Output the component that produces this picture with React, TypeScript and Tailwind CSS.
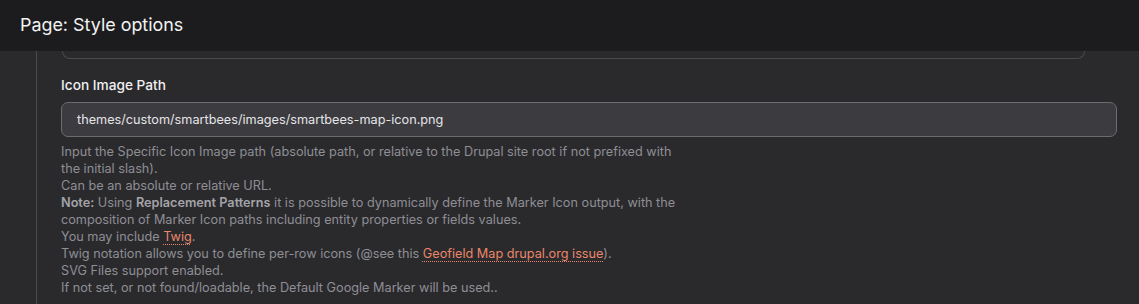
import React from "react";

export default function App() {
  return (
    <div className="w-[1139px] h-[304px] overflow-hidden bg-[#2a2a2d] font-['Inter',sans-serif] flex flex-col">
      <div className="h-[51px] shrink-0 bg-[#1c1c1e] flex items-center px-[20px]">
        <h1 className="text-[17.9px] text-[#f2f2f3] font-normal">Page: Style options</h1>
      </div>
      <div className="flex flex-1 min-h-0">
        <div className="w-[36px] shrink-0" />
        <div className="w-px bg-[#4a4a4f] shrink-0" />
        <div className="flex-1 min-w-0 pl-[24px] pr-[22px]">
          <div className="ml-px mr-[32px] h-[8px] border border-t-0 border-[#4a4a4f] rounded-b-[8px]" />
          <div className="mt-[17px] text-[13.7px] font-medium text-[#f0f0f2] leading-[18px]">Icon Image Path</div>
          <div className="mt-[8px] h-[35px] rounded-[7px] border border-[#6c6b72] bg-[#3c3b40] flex items-center px-[15px] text-[12.7px] text-[#e4e4e7]">
            themes/custom/smartbees/images/smartbees-map-icon.png
          </div>
          <div className="mt-[6px] text-[12.7px] leading-[17px] text-[#8e8e94] max-w-[622px]">
            <p>Input the Specific Icon Image path (absolute path, or relative to the Drupal site root if not prefixed with the initial slash).</p>
            <p>Can be an absolute or relative URL.</p>
            <p>
              <strong className="font-semibold text-[#a3a3a8]">Note:</strong> Using <strong className="font-semibold text-[#a3a3a8]">Replacement Patterns</strong> it is possible to dynamically define the Marker Icon output, with the composition of Marker Icon paths including entity properties or fields values.
            </p>
            <p>
              You may include <a className="text-[#e9866a] underline decoration-dotted decoration-1 underline-offset-[3px]">Twig</a>.
            </p>
            <p>
              Twig notation allows you to define per-row icons (@see this <a className="text-[#e9866a] underline decoration-dotted decoration-1 underline-offset-[3px]">Geofield Map drupal.org issue</a>).
            </p>
            <p>SVG Files support enabled.</p>
            <p>If not set, or not found/loadable, the Default Google Marker will be used..</p>
          </div>
        </div>
      </div>
    </div>
  );
}
